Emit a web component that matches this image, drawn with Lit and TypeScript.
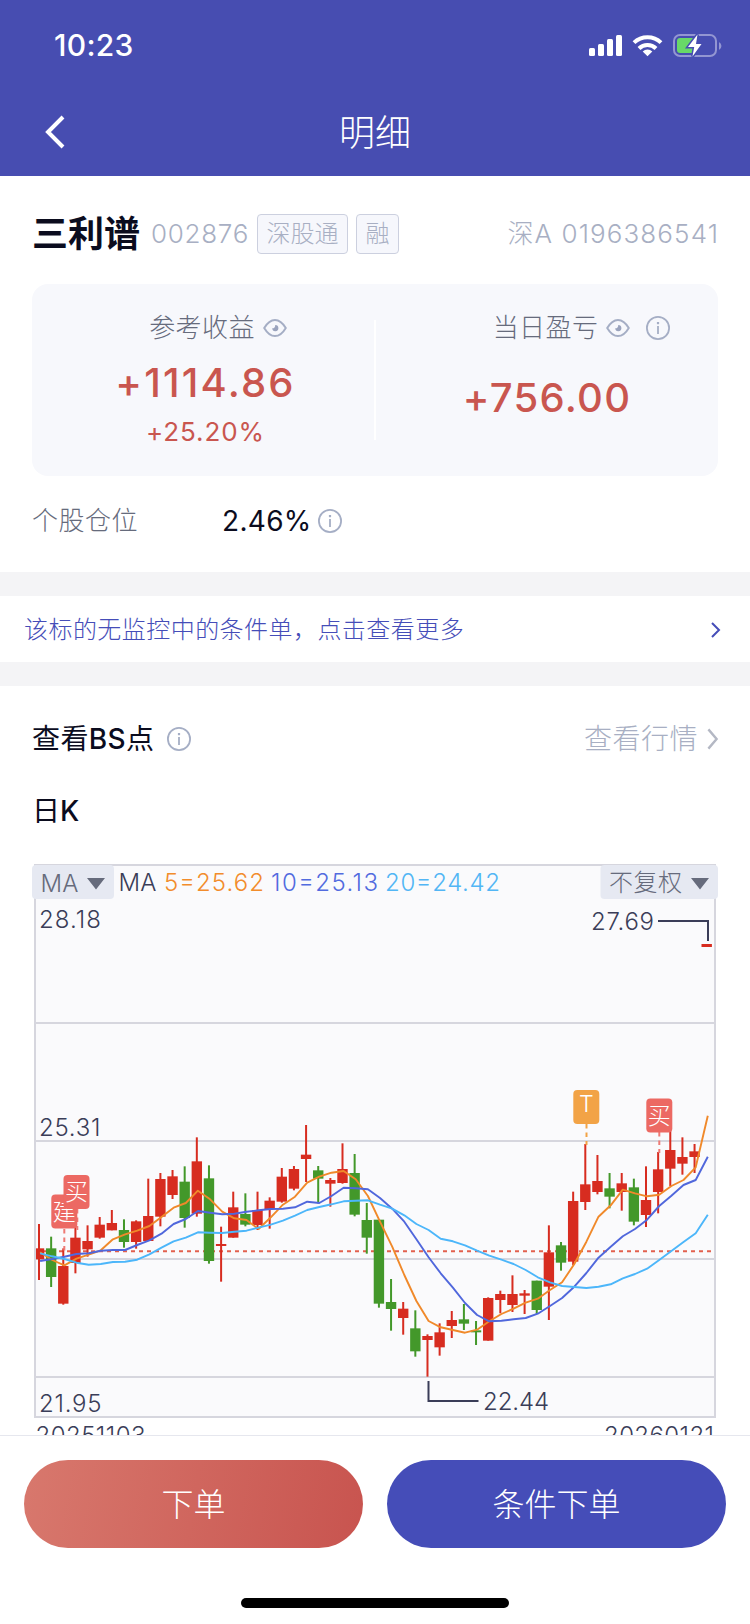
import { LitElement, html, svg, css } from "lit";
import { customElement, property } from "lit/decorators.js";

// Each row: high, body top, body bottom, low (thirds of a pixel below y = 1110), 1 = rising.
const CANDLES: number[][] = [
  [342, 415, 448, 510, 1], [380, 415, 501, 531, 0], [415, 468, 581, 584, 1], [340, 383, 459, 490, 1],
  [346, 393, 418, 440, 1], [321, 344, 383, 386, 1], [300, 339, 361, 361, 1], [328, 360, 396, 413, 0],
  [331, 334, 396, 416, 1], [206, 318, 393, 393, 1], [189, 207, 320, 349, 1], [180, 199, 255, 267, 1],
  [169, 215, 324, 353, 0], [82, 154, 311, 320, 1], [166, 205, 453, 461, 0], [350, 402, 408, 515, 1],
  [245, 292, 383, 383, 1], [250, 312, 344, 349, 0], [245, 300, 345, 360, 1], [262, 272, 297, 356, 1],
  [174, 200, 275, 278, 1], [168, 177, 236, 241, 1], [45, 134, 147, 216, 1], [168, 181, 206, 280, 0],
  [204, 210, 221, 290, 1], [100, 177, 219, 221, 1], [132, 189, 314, 319, 0], [279, 330, 383, 431, 0],
  [329, 329, 581, 593, 0], [507, 576, 597, 662, 0], [576, 596, 624, 674, 1], [601, 655, 724, 740, 0],
  [673, 678, 690, 800, 1], [640, 667, 712, 737, 1], [603, 630, 648, 684, 1], [582, 628, 641, 660, 0],
  [633, 661, 667, 705, 0], [562, 564, 692, 692, 1], [542, 552, 570, 610, 1], [496, 552, 585, 606, 1],
  [540, 550, 557, 612, 1], [512, 512, 600, 612, 0], [346, 427, 530, 630, 1], [396, 406, 458, 482, 0],
  [245, 273, 455, 465, 1], [102, 223, 276, 300, 1], [135, 213, 246, 253, 1], [189, 235, 260, 295, 0],
  [189, 220, 246, 302, 1], [206, 232, 335, 346, 0], [169, 270, 315, 351, 1], [126, 178, 246, 310, 1],
  [62, 120, 176, 228, 1], [82, 141, 161, 194, 1], [102, 124, 141, 189, 1], [-498, -498, -489, -489, 1],
];

const MA5 = [427, 450, 466, 446, 434, 421, 388, 373, 362, 348, 321, 293, 279, 242, 268, 305, 325, 330, 357, 322,
  284, 260, 218, 200, 188, 183, 208, 258, 335, 410, 495, 573, 633, 652, 660, 668, 659, 634, 612, 596, 578, 566,
  540, 517, 462, 395, 320, 286, 239, 250, 259, 254, 228, 210, 172, 17];
const MA10 = [453, 447, 440, 432, 430, 422, 420, 420, 405, 391, 371, 342, 327, 303, 308, 313, 311, 305, 301, 297,
  296, 292, 275, 279, 258, 233, 235, 238, 264, 296, 335, 388, 442, 490, 533, 579, 615, 634, 632, 628, 624, 611,
  588, 564, 530, 489, 443, 410, 379, 357, 329, 288, 257, 225, 210, 140];
const MA20 = [430, 439, 447, 458, 464, 462, 456, 455, 449, 433, 413, 394, 383, 367, 368, 369, 365, 362, 353, 344,
  332, 317, 300, 291, 283, 274, 272, 271, 284, 296, 316, 342, 360, 386, 394, 406, 422, 437, 449, 462, 480, 502,
  517, 528, 531, 534, 530, 523, 505, 492, 476, 450, 423, 396, 370, 314];

const RED = "#d72c20";
const GREEN = "#43982a";
const px = (i: number) => 39 + 12.14 * i;
const py = (v: number) => 1110 + v / 3;
const line = (a: number[]) => a.map((v, i) => `${(px(i) + 1.1).toFixed(1)},${py(v).toFixed(1)}`).join(" ");

@customElement("info-icon")
class InfoIcon extends LitElement {
  static styles = css`:host { display: block; width: 24px; height: 24px; } svg { display: block; }`;
  render() {
    return html`<svg width="24" height="24" viewBox="0 0 24 24" fill="none" stroke="#a5aec5">
      <circle cx="12" cy="12" r="11.1" stroke-width="1.8"/>
      <path d="M12 10v8" stroke-width="1.8"/><path d="M12 6v2.2" stroke-width="2.2"/></svg>`;
  }
}

@customElement("eye-icon")
class EyeIcon extends LitElement {
  static styles = css`:host { display: block; width: 24px; height: 20px; } svg { display: block; }`;
  render() {
    return html`<svg width="24" height="20" viewBox="0 0 24 20">
      <path d="M1.2 10C3.8 5.600 7.600 1.900 12 1.900S20.200 5.600 22.800 10C20.200 14.400 16.400 18.100 12 18.100S3.800 14.400 1.200 10Z" fill="none" stroke="#a5aec5" stroke-width="2" stroke-linejoin="round"/>
      <path d="M12.200 7A3.100 3.100 0 1 1 9.200 10.300A2.800 2.800 0 0 0 12.200 7Z" fill="#9aa3bd"/></svg>`;
  }
}

@customElement("chevron-icon")
class ChevronIcon extends LitElement {
  @property({ type: Number }) w = 10;
  @property({ type: Number }) h = 18;
  @property({ type: Number }) thick = 2;
  @property() color = "#fff";
  @property({ type: Boolean }) back = false;
  static styles = css`:host { display: block; } svg { display: block; }`;
  render() {
    const { w, h, thick: t } = this;
    const near = this.back ? w - t : t;
    const far = this.back ? t : w - t;
    return html`<svg width=${w} height=${h}><path d="M${near} ${t}L${far} ${h / 2}L${near} ${h - t}"
      fill="none" stroke=${this.color} stroke-width=${t}/></svg>`;
  }
}

@customElement("k-chart")
class KChart extends LitElement {
  static styles = css`
    :host { display: block; height: 575px; overflow: hidden; }
    svg { display: block; }
    text { font-family: Inter, "Noto Sans CJK SC", sans-serif; font-size: 24px; font-weight: 350; fill: #3a3d58; }
    .tag { font-size: 23px; font-weight: 300; fill: #fff; text-anchor: middle; }
    .pick { fill: #666b7c; font-weight: 300; }
    .m5 { fill: #f28c2b; } .m10 { fill: #526bdf; } .m20 { fill: #52b6f5; }
  `;
  label(x: number, y: number, s: string, w: number, cls = "") {
    return svg`<text class=${cls} x=${x} y=${y} textLength=${w}>${s}</text>`;
  }
  tag(x: number, y: number, s: string, color: string, textY: number) {
    return svg`<rect x=${x} y=${y} width="26" height="34" rx="4" fill=${color}/>
      <text class="tag" x=${x + 13} y=${textY}>${s}</text>`;
  }
  render() {
    return html`<svg width="750" height="575" viewBox="0 860 750 575">
      <rect x="35" y="865" width="680" height="552" fill="#fafafc" stroke="#d6d6de" stroke-width="2"/>
      <path d="M36 1023H715M36 1141H715M36 1259H715M36 1377H715" stroke="#d6d6de" stroke-width="2"/>
      <path d="M36 1251.300H713" stroke="#e2604e" stroke-width="2" stroke-dasharray="4 4" stroke-dashoffset="1"/>
      <defs><clipPath id="plot"><rect x="36" y="866" width="678" height="550"/></clipPath></defs>
      <g clip-path="url(#plot)">
        ${CANDLES.map(([hi, top, bot, lo, up], i) => {
          const c = up ? RED : GREEN;
          return svg`<rect x=${px(i) - 1} y=${py(hi)} width="2" height=${(lo - hi) / 3} fill=${c}/>
            <rect x=${px(i) - 5.2} y=${py(top)} width="10.400" height=${(bot - top) / 3} fill=${c}/>`;
        })}
        <g fill="none" stroke-width="1.900" stroke-linejoin="round">
          <polyline points=${line(MA5)} stroke="#f0892a"/>
          <polyline points=${line(MA10)} stroke="#5067dc"/>
          <polyline points=${line(MA20)} stroke="#4cb6fa"/>
        </g>
      </g>
      <g fill="none" stroke-width="2" stroke-dasharray="4.500 4">
        <path d="M64.300 1229V1252M77.300 1209V1230M659.300 1132V1153" stroke="#ee7a75"/>
        <path d="M586.500 1124V1145" stroke="#f2a346"/>
      </g>
      ${this.tag(51.300, 1194.500, "建", "#ec6963", 1220)}
      ${this.tag(63.500, 1175, "买", "#ec6963", 1200)}
      ${this.tag(573.300, 1090, "T", "#f2a346", 1112)}
      ${this.tag(646.300, 1098.500, "买", "#ec6963", 1124)}
      <path d="M658 921H708V941M428.500 1381V1401H478.500" fill="none" stroke="#3a3d58" stroke-width="2"/>
      <rect x="32" y="865" width="82" height="34" rx="4" fill="#e6e9f2"/>
      <rect x="600.500" y="865" width="117.500" height="34" rx="4" fill="#e6e9f2"/>
      <path d="M87 878h18l-9 11.500zM691 878h18l-9 11.500z" fill="#666b7c"/>
      ${this.label(40.500, 891.500, "MA", 38, "pick")}
      ${this.label(609, 891, "不复权", 73, "pick")}
      ${this.label(118.500, 890.500, "MA", 38)}
      ${this.label(164, 890.500, "5=25.62", 100, "m5")}
      ${this.label(271, 890.500, "10=25.13", 107, "m10")}
      ${this.label(385, 890.500, "20=24.42", 115, "m20")}
      ${this.label(39, 927.500, "28.18", 62)}
      ${this.label(591, 929.500, "27.69", 63)}
      ${this.label(39, 1135.500, "25.31", 61.500)}
      ${this.label(39, 1411.500, "21.95", 62.500)}
      ${this.label(483, 1409.500, "22.44", 66)}
      ${this.label(35.500, 1443.500, "20251103", 110)}
      ${this.label(604, 1443.500, "20260121", 110)}
    </svg>`;
  }
}

@customElement("app-root")
class AppRoot extends LitElement {
  static styles = css`
    :host { display: flex; flex-direction: column; width: 750px; height: 1624px; overflow: hidden; background: #fff;
      font-family: Inter, "Noto Sans CJK SC", sans-serif; color: #0b0c1e; font-size: 26px; line-height: 1; }
    * { box-sizing: border-box; }
    .head { height: 176px; background: #474db1; color: #fff; display: flex; flex-direction: column; flex: none; }
    .status { height: 90px; display: flex; align-items: center; justify-content: space-between; padding: 0 28px 0 54px; }
    .time { font-size: 30px; font-weight: 550; letter-spacing: 0.300px; }
    .nav { height: 84px; display: grid; grid-template-columns: 67px 1fr 67px; align-items: center; }
    .nav chevron-icon { justify-self: end; }
    .title { text-align: center; font-size: 36px; font-weight: 300; padding-top: 2px; }
    .stock { height: 108px; padding: 8px 32px 0; display: flex; align-items: center; flex: none; }
    .name { font-size: 36px; font-weight: 600; }
    .code { margin-left: 11px; color: #a8afc3; letter-spacing: 0.700px; font-weight: 320; }
    .acct { margin-left: auto; color: #a8afc3; letter-spacing: 1.100px; font-weight: 320; margin-right: -1px; }
    .chip { height: 40px; padding: 0 8.500px; margin-left: 8px; border: 1px solid #ccd0df; border-radius: 4px;
      background: #f6f7fc; color: #a8afc3; font-size: 24px; font-weight: 300; display: flex; align-items: center; }
    .card { margin: 0 32px; height: 192px; border-radius: 16px; background: #f7f8fc; flex: none;
      display: grid; grid-template-columns: 342px 2px 342px; align-items: center; }
    .rule { width: 2px; height: 120px; background: #fff; }
    .half { height: 192px; display: flex; flex-direction: column; align-items: center; }
    .cap { display: flex; align-items: center; height: 30px; margin-top: 29px; color: #666b7c; font-weight: 300; letter-spacing: 0.400px; }
    .cap eye-icon { margin-left: 8px; }
    .cap info-icon { margin-left: 16px; }
    .big { font-size: 40px; font-weight: 550; color: #c9564f; letter-spacing: 1.300px; line-height: 40px; }
    .pct { color: #c9564f; letter-spacing: 0.900px; line-height: 26px; }
    .left { padding-left: 5px; } .left .cap { margin-left: 25px; }
    .left .big { margin-top: 20px; letter-spacing: 2.200px; } .left .pct { margin-top: 16px; }
    .right .cap { margin-left: 69px; } .right .big { margin-top: 35px; }
    .pos { height: 96px; padding: 0 32px 7px; display: flex; align-items: center; flex: none; }
    .pos-label { width: 190px; color: #666b7c; font-weight: 300; letter-spacing: 0.500px; }
    .pos-value { font-size: 28px; font-weight: 370; margin-right: 6px; letter-spacing: 0.300px; }
    .gap { height: 24px; background: #f4f4f6; flex: none; }
    .more { height: 66px; padding: 2px 29px 0 24px; display: flex; align-items: center; justify-content: space-between;
      color: #454db8; font-size: 24px; font-weight: 300; letter-spacing: 0.450px; flex: none; }
    .bs { height: 104px; padding: 1px 31px 0 32px; display: flex; align-items: center; font-size: 28px; flex: none;
      letter-spacing: 0.400px; }
    .bs info-icon { margin-left: 12px; }
    .latin { font-weight: 500; }
    .quote { margin-left: auto; margin-right: 8px; color: #a8afc3; font-weight: 300; letter-spacing: 0.500px; }
    .day { height: 70px; padding: 6px 32px 0; font-size: 28px; line-height: 30px; flex: none; }
    .foot { height: 189px; border-top: 1px solid #e6e7ee; background: #fff; padding-top: 24px; flex: none;
      display: flex; flex-direction: column; align-items: center; gap: 50px; }
    .btns { display: flex; gap: 24px; width: 702px; }
    .btn { flex: 1; height: 88px; padding-top: 1px; border-radius: 44px; color: #fff; font-size: 32px; font-weight: 300;
      display: flex; align-items: center; justify-content: center; background: #454db8; }
    .sell { background: linear-gradient(100deg, #d8786d, #c8544f); }
    .home { width: 268px; height: 10px; border-radius: 5px; background: #000; }
  `;
  render() {
    return html`
      <div class="head">
        <div class="status">
          <span class="time">10:23</span>
          <svg width="134" height="24" viewBox="588 33 134 24">
            <g fill="#fff">
              <rect x="589" y="48" width="6" height="8" rx="1.500"/><rect x="598" y="44" width="6" height="12" rx="1.500"/>
              <rect x="607" y="39" width="6" height="17" rx="1.500"/><rect x="616" y="35" width="6" height="21" rx="1.500"/>
              <path d="M647.500 56.200l-4.800-4.700a7 7 0 0 1 9.600 0z"/>
            </g>
            <g fill="none" stroke="#fff" stroke-width="4">
              <path d="M634 42.600a19.500 19.500 0 0 1 27 0"/><path d="M639 48.500a12 12 0 0 1 17 0"/>
            </g>
            <rect x="674" y="35" width="42" height="21" rx="6" fill="none" stroke="#9396d2" stroke-width="2"/>
            <path d="M719 42a4.500 4.500 0 0 1 0 8z" fill="#9396d2"/>
            <path d="M680 38h15l-3 15h-12q-3 0-3-3v-9q0-3 3-3z" fill="#68d868"/>
            <path d="M697.500 34.500L688 47h6.200L692.500 56.500 701.500 44h-5.500z" fill="#fff" stroke="#474db1" stroke-width="3" paint-order="stroke"/>
          </svg>
        </div>
        <div class="nav">
          <chevron-icon back .w=${23} .h=${38} .thick=${4} color="#fff"></chevron-icon>
          <div class="title">明细</div>
        </div>
      </div>
      <div class="stock">
        <span class="name">三利谱</span><span class="code">002876</span>
        <span class="chip">深股通</span><span class="chip">融</span>
        <span class="acct">深A 0196386541</span>
      </div>
      <div class="card">
        <div class="half left">
          <div class="cap">参考收益<eye-icon></eye-icon></div>
          <div class="big">+1114.86</div>
          <div class="pct">+25.20%</div>
        </div>
        <div class="rule"></div>
        <div class="half right">
          <div class="cap">当日盈亏<eye-icon></eye-icon><info-icon></info-icon></div>
          <div class="big">+756.00</div>
        </div>
      </div>
      <div class="pos"><span class="pos-label">个股仓位</span><span class="pos-value">2.46%</span><info-icon></info-icon></div>
      <div class="gap"></div>
      <div class="more"><span>该标的无监控中的条件单，点击查看更多</span>
        <chevron-icon .w=${11} .h=${18} .thick=${2} color="#454db8"></chevron-icon></div>
      <div class="gap"></div>
      <div class="bs"><span>查看<span class="latin">BS</span>点</span><info-icon></info-icon>
        <span class="quote">查看行情</span>
        <chevron-icon .w=${13} .h=${24} .thick=${2.4} color="#b4b8c4"></chevron-icon></div>
      <div class="day">日<span class="latin">K</span></div>
      <k-chart></k-chart>
      <div class="foot">
        <div class="btns"><div class="btn sell">下单</div><div class="btn">条件下单</div></div>
        <div class="home"></div>
      </div>`;
  }
}
